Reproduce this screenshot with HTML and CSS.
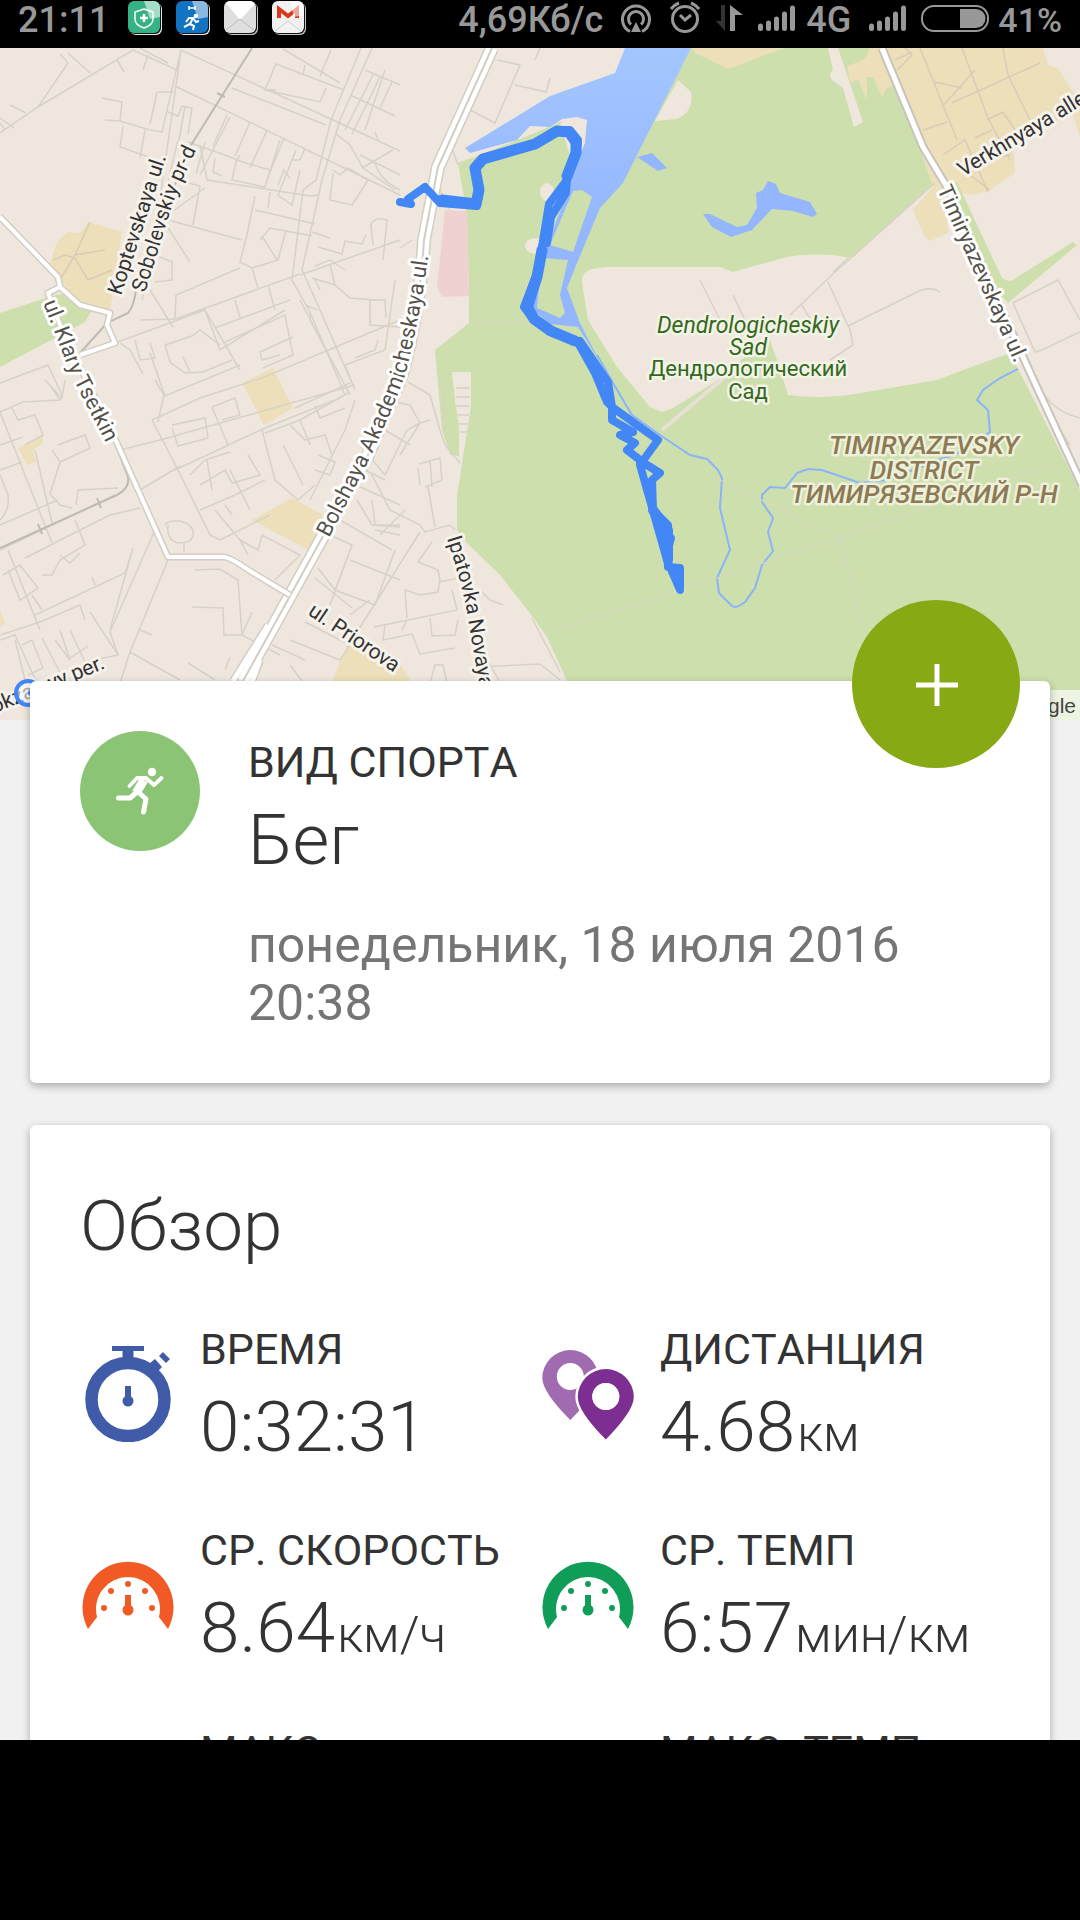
FILE: index.html
```
<!DOCTYPE html>
<html lang="ru">

<head>
    <meta charset="UTF-8">
    <meta name="viewport" content="width=device-width, initial-scale=1.0">
    <title>Тренировка</title>
    <link rel="stylesheet" href="styles.css">
</head>

<body>
    <header class="status-bar">
        <div class="status-left">
            <span class="clock">21:11</span>
            <svg width="34" height="36" viewBox="0 0 34 36">
                <rect x="2" y="3" width="32" height="32" rx="6" fill="#e8e8e8" />
                <rect x="1" y="2" width="32" height="32" rx="6" fill="#111" />
                <rect x="0" y="1" width="32" height="32" rx="6" fill="#35b385" />
                <path d="M16 1h10a6 6 0 0 1 6 6v10L22 19z" fill="#fff" opacity=".55" />
                <path d="M16 9l9 3v7q0 6-9 9q-9-3-9-9v-7z" fill="none" stroke="#fff" stroke-width="1.500" />
                <path d="M16 14v8M12 18h8" stroke="#fff" stroke-width="2.500" />
            </svg>
            <svg width="34" height="36" viewBox="0 0 34 36">
                <rect x="2" y="3" width="32" height="32" rx="6" fill="#e8e8e8" />
                <rect x="1" y="2" width="32" height="32" rx="6" fill="#111" />
                <rect x="0" y="1" width="32" height="32" rx="6" fill="#1273c0" />
                <path d="M16 1h10a6 6 0 0 1 6 6v10L22 19z" fill="#fff" opacity=".5" />
                <path d="M13 6v4M19 6v4M13 8h6" stroke="#fff" stroke-width="1.500" />
                <circle cx="20" cy="16" r="2.300" fill="#fff" />
                <path d="M10 22l3-4h4l-3 6-6 3M14 24l4 2-1 4M17 18l3 4 3-1" fill="none" stroke="#fff" stroke-width="2" />
            </svg>
            <svg width="34" height="36" viewBox="0 0 34 36">
                <rect x="2" y="3" width="32" height="32" rx="6" fill="#c8c8c8" />
                <rect x="1" y="2" width="32" height="32" rx="6" fill="#111" />
                <rect x="0" y="1" width="32" height="32" rx="6" fill="#dedede" />
                <path d="M2 3Q4 1 6 1h20q3 0 5 3L16 20z" fill="#fff" />
                <path d="M1 31l15-12 15 12" fill="none" stroke="#bbb" />
            </svg>
            <svg width="34" height="36" viewBox="0 0 34 36">
                <rect x="2" y="3" width="32" height="32" rx="6" fill="#c8c8c8" />
                <rect x="1" y="2" width="32" height="32" rx="6" fill="#111" />
                <rect x="0" y="1" width="32" height="32" rx="6" fill="#f1f1f1" />
                <path d="M7 18V9l9 7 9-7v9" fill="none" stroke="#d93a1e" stroke-width="4" />
                <path d="M18 1h8a6 6 0 0 1 6 6v8L22 17z" fill="#fff" opacity=".55" />
                <path d="M3 31l13-10 13 10" fill="none" stroke="#d0d0d0" />
            </svg>
        </div>
        <div class="status-right">
            <span>4,69Кб/с</span>
            <svg width="43" height="36" viewBox="0 0 43 36" fill="none" stroke="#989898" stroke-width="3">
                <path d="M19 31.500a13.500 13.500 0 1 1 12 0" />
                <path d="M20 24.500a7.500 7.500 0 1 1 10 0" />
                <path d="M25 22l5 10h-10z" fill="#989898" stroke="none" />
            </svg>
            <svg width="38" height="36" viewBox="0 0 38 36" fill="none" stroke="#989898" stroke-width="3">
                <circle cx="23" cy="19" r="12.500" />
                <path d="M18 15l5 5 6-5M9 9q3-4 8-6M29 3q5 2 8 6" />
            </svg>
            <svg width="38" height="36" viewBox="0 0 38 36">
                <path d="M17 5h-4v16H8l9 10z" fill="#333" />
                <path d="M22 31V5l13 10h-8v16z" fill="#989898" />
            </svg>
            <svg width="44" height="36" viewBox="0 0 44 36" stroke="#989898" stroke-width="5" stroke-linecap="round">
                <path d="M6.500 26v2.500M14.500 23v5.500M22.500 19v9.500M30.500 14v14.500M38.500 8v20.500" />
            </svg>
            <span>4G</span>
            <svg width="54" height="36" viewBox="0 0 54 36" stroke="#989898" stroke-width="5" stroke-linecap="round">
                <path d="M12.500 26v2.500M20.500 23v5.500M28.500 19v9.500M36.500 14v14.500M44.500 8v20.500" />
            </svg>
            <svg width="69" height="36" viewBox="0 0 69 36">
                <rect x="1" y="6" width="66" height="25" rx="12" fill="none" stroke="#989898" stroke-width="2" />
                <path d="M39 9h16a9.500 9.500 0 0 1 0 19H39z" fill="#989898" />
            </svg>
            <span class="battery">41%</span>
        </div>
    </header>

    <main class="screen">
        <svg class="map" viewBox="0 48 1080 672" preserveAspectRatio="xMidYMin slice">
            <defs>
                <linearGradient id="water" x1="0" y1="0" x2="0" y2="1">
                    <stop offset="0" stop-color="#a4c6ff" />
                    <stop offset=".6" stop-color="#93b6ff" />
                </linearGradient>
                <path id="p-sobolevskiy" d="M145 293L172 206Q178 188 197 148" />
                <path id="p-klary" d="M43 303L55 333L70 373L112 455" />
                <path id="p-bolshaya" d="M329 538L368 462Q398 398 406 372Q424 300 430 240" />
                <path id="p-ipatovka" d="M447 538Q462 585 467 612L480 690" />
            </defs>

            <!-- built-up quarters -->
            <g fill="#ecdfb9">
                <path d="M88 222L122 232L110 310L80 303L60 280L50 263L57 242L68 232L80 233z" />
                <path d="M242 383L273 368L293 408L264 425z" />
                <path d="M18 448L43 435V443L33 450L36 462L27 465z" />
                <path d="M252 520L292 498L323 515L312 552z" />
                <path d="M348 643L400 663L412 684H331z" />
                <path d="M0 610L5 623L0 626z" />
            </g>

            <!-- parks -->
            <g fill="#cddfad">
                <path d="M0 313L55 295L68 293L92 310L85 322L0 367z" />
                <path d="M458 163L480 155L530 135L560 122L600 125L692 48H882L897 88L935 183L851 258L833 255Q800 253 783 258L733 272L720 267H607Q580 268 582 282L588 320L617 367L650 407L662 412L673 408L723 377L768 335L777 360L788 395Q827 400 867 392L937 380L963 370L1010 353L1080 490V720H580L567 681L547 637L533 617L500 575L467 543L457 530V497L463 457L450 455L442 430L435 350L469 323V290L467 215z" />
            </g>
            <g fill="#efe7de">
                <path d="M452 372H471V407L463 457H459V427L455 400z" />
                <path d="M678 80L691 92Q694 112 677 119L655 121z" />
                <path d="M828 48H838L863 122L854 127L843 88L832 80Q828 74 833 70z" />
                <ellipse cx="547" cy="192" rx="7" ry="9" />
                <ellipse cx="537" cy="246" rx="12" ry="8" />
                <path d="M548 250L572 257L558 260L542 258z" />
                <path d="M560 125L565 117L587 118L585 145L575 170z" />
            </g>
            <g fill="#ecdfb9">
                <path d="M695 53L692 48H784L728 69z" />
                <path d="M868 48Q872 58 847 66L850 82L858 80L867 100V77H873L882 97L887 88L897 85L882 48z" />
                <path d="M882 48H1043L1048 65L1058 68L1080 103V137L1072 112L1013 148L1015 173L987 192L970 195L945 190L948 233L930 241L925 237L913 210L933 187L900 92z" />
            </g>
            <path d="M950 182H957L1002 278Q1008 282 1013 280L1073 242L1077 245L1008 303L996 290z" fill="#cddfad" />
            <path d="M445 210L467 211L469 296L442 297L437 287z" fill="#efd2cf" />

            <!-- water -->
            <path d="M625 48H691L636 157L623 183L600 208L577 263L567 288L580 323L600 362L578 327L550 324L533 310L535 287L550 237L570 187L572 173L585 143L587 120L577 117L562 119L550 127L530 126L517 140L470 153L465 148L550 96L615 73z" fill="url(#water)" />
            <path d="M573 191L582 190L592 197L573 252L550 245z" fill="#cddfad" />
            <path d="M542 258L568 260L560 295L565 313L560 318L537 308z" fill="#cddfad" />
            <path d="M637 157L652 153L667 168L658 171z" fill="#93b6ff" />
            <path d="M703 214H710L737 227L747 225L757 208L756 193L763 190L768 181L776 184L780 193L810 202L817 214L813 217L793 211L772 209L752 230L731 237L712 227z" fill="#93b6ff" />
            <path d="M597 355L613 383L632 415L660 435L690 455L707 459L718 470L722 478L720 508L730 550L717 578L719 593L732 606Q736 609 745 602L755 588L762 565L773 551L768 532L773 518L762 502V495L770 487L785 488L797 473L808 469L822 470L860 483L887 480L960 452L990 432L988 410L977 400L983 390L1000 378L1018 369" fill="none" stroke="#8bb4f8" stroke-width="2" />

            <!-- side streets -->
            <g fill="none" stroke="#d7d1c8" stroke-width="1.500">
                <path d="M0 133L38 107L133 50L177 70M5 130L0 123M38 107L68 63L60 54M68 53L90 73M10 105L26 113M0 118L14 128M117 60L124 72M148 55L143 70M140 48L168 63" />
                <path d="M102 98L122 102L120 121L105 120M120 121L150 130L162 132L181 50L333 120L400 151M175 86L400 195M181 50L150 270L142 300M157 92L150 124M158 92L175 92M185 106L179 140M168 112L178 116L182 106L192 108L188 134" />
                <path d="M123 126L120 147L152 158M145 130L140 158M178 140L160 215M232 88L326 125M188 142L225 155L240 161M227 115L213 146M250 122L235 156M267 130L250 168M284 138L270 172M240 155L236 162L232 180L265 187L270 170L240 161M265 187L280 140M305 148L300 160L293 160M290 178L284 170L278 185M296 150L278 195L292 205L300 170" />
                <path d="M200 145L207 180L310 196L318 195M205 142L196 174M230 117L200 175M215 158L213 172L222 176M177 180L200 186L193 225M165 217L205 188M168 220L242 240M255 196L247 235L240 262L252 268L278 260L286 230M255 210L315 224M270 192L268 208M262 236L277 260M260 240L270 228L312 236M252 268L258 288" />
                <path d="M361 48L331 120L316 180L303 190L292 280L310 312L345 395M372 48L340 120L322 180L302 270L320 310L355 390M276 90L265 90L276 64L344 90M283 49L340 83M265 90L320 102L326 88M305 65L303 75M331 50L320 76M365 70L400 85M373 75L345 130M380 77L352 134M392 82L380 108M350 95L395 116M375 132L378 140" />
                <path d="M335 133L350 145L363 168L395 190M333 170L340 175L348 168L368 180L352 205L330 200L333 173M362 168L393 150M375 163Q380 180 400 190M312 232L330 238M318 247L342 254L345 241L362 244L366 235M373 245L371 225Q374 216 387 220L383 260M300 275L400 240M315 266L330 260L345 270M330 264L335 285L350 298L375 300M312 278L335 285M315 280L320 290M305 305L318 310" />
                <path d="M175 319L300 274M175 319L176 295L240 268M140 320L175 319M143 250L172 262L172 280L155 282M163 220L190 262M150 290L173 327M115 343L205 310L240 370M205 310L220 350L285 310M215 328L290 300M235 300L240 318M223 343L285 315L293 355L263 368M293 337L260 352L262 360L280 355M268 285L275 310M300 300L350 395M310 313L310 320L350 395" />
                <path d="M120 343L130 350L143 374M135 340L140 360L155 358L150 343M165 345L170 362L185 373L203 372L232 360M165 345L192 336L200 330L220 345M183 357L190 372M150 353L165 396L240 365M370 300L370 325L400 327M395 280L385 350L345 365L350 378M355 358L375 350L378 340M386 318L385 300L370 300" />
                <path d="M0 412L23 402L60 400L62 395L48 365L0 383M50 385L60 400M45 380L62 398L65 380M0 412L52 543M12 408L18 420L35 415L43 435L25 445M35 450L52 523M52 450L60 462L90 448L85 435L58 445M60 462L50 494L60 505L72 508M76 505L78 490L118 488M115 495L0 550" />
                <path d="M0 445L23 437M0 470L22 462M0 475L8 495Q10 510 0 520M0 525L58 500M25 558L80 530M80 530L110 515L140 508M75 520L85 545L60 560L52 575L42 575M60 555L70 563L80 553M8 550L40 630M3 575L20 565L38 588L20 600L8 570M0 635L40 622L80 605L85 620M35 615L125 573L133 548L110 630M32 595L42 610M92 577L95 585" />
                <path d="M155 530L110 632L118 655M168 560L130 652L120 683M130 652L180 680M90 612L118 655L85 662L70 630M15 640L25 680M42 638L65 682M22 645L32 640L43 668L28 675M55 640L70 660M70 658L88 646M60 630L70 660M195 570L220 569L238 580L242 635L280 655M192 607L223 608L224 635L242 635M242 635L252 612M140 630L152 635M230 657L225 670M188 663L215 680M0 640L15 635L40 690" />
                <path d="M152 420L200 398L262 378L400 320M160 440L355 385M152 420L178 470L210 535L220 540M158 422L164 395L155 380M175 470L265 428L340 398M120 450L160 440M140 490L180 466M172 425L205 418L208 438L178 446L172 428M212 407L235 398L240 415L222 420M212 407L228 445M262 430L275 480L298 500L315 485M265 433L300 420L310 445M283 445L303 485M190 475L205 460L230 452M200 485L225 470L232 483L260 475L248 455M207 460L212 490M230 470L250 510M215 510L240 540L248 555M200 510L235 495L265 480M225 505L232 515M220 540L270 515M240 540L258 550L262 535L300 555L275 580" />
                <path d="M295 408L350 383M300 420L350 392M315 405L320 418L345 408M290 425L305 440L325 435L332 455M318 455L335 462L330 475L315 470M345 430L355 400M345 430L310 500M345 480L400 505M372 500L375 525L400 525M340 520L392 550M330 535L352 545L335 590M318 568L335 590L375 605L395 550M352 545L330 605M315 578L352 608M290 640L340 660L350 645L305 622M272 645L305 660M290 665L305 685M165 525Q168 520 180 521Q195 525 193 536Q190 544 178 543Q166 540 168 525M184 544V552" />
                <path d="M372 475L390 510L420 525L425 532L450 525L455 530M365 470L385 480M357 500L372 525L400 527M360 445L385 475L407 430L420 423L430 420M385 400L410 405L420 423L400 455M385 430L410 445M408 382L430 395L440 430L445 445L460 463M419 464L440 458L442 480L425 487M430 460L432 487M418 468L420 485M428 487L435 527M420 532L352 640M405 510L380 535M350 560L400 580M375 530L400 535M370 600L350 615" />
                <path d="M432 542L418 562L438 570L440 580L438 592L420 595L405 590L407 618M438 582L460 578M374 627L457 610L452 590M385 626L383 640L412 634L420 654L455 648M430 618L432 636L455 635L458 620M430 683L435 665L443 665L447 683M480 590L490 600L503 605M485 655L500 683M475 667L540 664L560 680M532 618L560 672M407 620L402 630M442 378L445 430" />
                <path d="M456 388H470M456 397H470M456 406H470M457 415H469M459 424H468M460 432H467" />
                <path d="M497 60L520 65L495 123L470 110M515 85L546 92L550 78M535 60L540 48M458 165L450 143M450 210L440 190M360 155L400 175M400 248L412 240M385 70L365 130" />
                <path d="M935 183L851 258L835 272L790 315M833 272L848 258M828 282L850 330L853 345L830 360M848 326L915 293Q930 285 940 292M700 280L720 320M733 295L745 320M802 305L815 328M1013 303L1058 280L1080 320M1013 303L1035 352L1042 350L1080 332M1033 372Q1045 410 1080 418M1060 430L1070 445" />
                <path d="M662 430L725 377" stroke="#e8e0d5" stroke-width="4" />
            </g>
            <g fill="none" stroke="#d9ccb8" stroke-width="1.500">
                <path d="M897 70L912 55L905 48M920 48L957 140M895 60L912 52M935 82L962 88M942 107L975 70M952 103L1040 63M962 48L988 118L1010 160M1003 48L1008 75L1030 120M923 130L947 122M943 155L965 140L988 192M987 120L1003 112L1015 130M975 138L992 130M970 165L1010 155M970 175L990 190" />
                <path d="M60 280L75 255L105 250M53 260L65 255L75 258L88 280L112 270M75 255L90 222" />
            </g>
            <g fill="none" stroke="#dad8c6" stroke-width="1">
                <path d="M545 633L650 600L840 538L1050 465M720 480L840 538L862 625M470 323L540 322" />
            </g>

            <!-- railway -->
            <g fill="none" stroke="#bdbab5" stroke-width="2">
                <path d="M252 48L188 150L136 290Q134 306 128 313L107 323L80 353M115 443L128 477Q130 488 117 495L0 548M38 524L42 534M97 498L101 508M217 93L225 97" />
            </g>

            <!-- main roads -->
            <g fill="none" stroke-linejoin="round">
                <path d="M492 48L438 167L424 240Q420 310 402 375L368 455L322 538L243 681" stroke="#d3cdc4" stroke-width="14" />
                <path d="M268 625L233 681M260 660L249 690" stroke="#d3cdc4" stroke-width="8" />
                <path d="M492 48L438 167L424 240Q420 310 402 375L368 455L322 538L243 681" stroke="#fff" stroke-width="11" />
                <path d="M268 625L233 681M260 660L249 690" stroke="#fff" stroke-width="5" />
                <path d="M492 48L438 167L424 240Q420 310 402 375L368 455L322 538L243 681" stroke="#d3cdc4" stroke-width="2" />
                <path d="M882 48L923 147L947 187L1028 368L1082 485" stroke="#c9c3bd" stroke-width="9" />
                <path d="M882 48L923 147L947 187L1028 368L1082 485" stroke="#fff" stroke-width="5" />
                <path d="M0 217L58 277L60 287L48 293L62 330L117 443L168 557H223Q230 557 250 571L290 595M60 287L80 305L110 313L107 325L115 343L80 355" stroke="#d3cdc4" stroke-width="7" />
                <path d="M0 217L58 277L60 287L48 293L62 330L117 443L168 557H223Q230 557 250 571L290 595M60 287L80 305L110 313L107 325L115 343L80 355" stroke="#fff" stroke-width="4" />
            </g>

            <!-- recorded track -->
            <g fill="none" stroke="#4387f6" stroke-width="8" stroke-linecap="round" stroke-linejoin="round">
                <path d="M400 202L411 204L408 199L425 187L440 203L477 206L480 190L475 168L482 158L535 145L557 130H570L578 140L577 153L567 180L549 204L542 247L537 273L524 307L532 318L550 332L577 341L595 373L607 402L612 407L658 440L642 462L660 473L652 480L653 510L668 525V535L671 538L667 553L668 567L680 568V590L667 560L640 465V460L627 450L635 443L620 435L633 432L612 420V407L608 382L580 341" />
                <path d="M567 180L566 193L551 217L547 243M542 247L537 280L529 307" />
                <path d="M442 200L476 204L479 190L475 168L483 159L535 144L557 131L569 132L576 142L576 153L567 176M542 250L537 277L527 306L534 319L551 331L575 341" stroke-width="11" />
                <path d="M653 510L668 530L668 560" stroke-width="10" />
            </g>

            <!-- names -->
            <g class="street">
                <text transform="translate(121 296) rotate(-72)">Koptevskaya ul.</text>
                <text><textPath href="#p-sobolevskiy">Sobolevskiy pr-d</textPath></text>
                <text class="road"><textPath href="#p-klary">ul. Klary Tsetkin</textPath></text>
                <text class="road"><textPath href="#p-bolshaya">Bolshaya Akademicheskaya ul.</textPath></text>
                <text class="road" transform="translate(937 189) rotate(66)">Timiryazevskaya ul.</text>
                <text transform="translate(963 177) rotate(-31)">Verkhnyaya alley</text>
                <text><textPath href="#p-ipatovka">Ipatovka Novaya</textPath></text>
                <text transform="translate(307 614) rotate(34)">ul. Priorova</text>
                <text transform="translate(106 668) rotate(-22)" text-anchor="end">Vokzalnyy per.</text>
            </g>
            <g class="park" text-anchor="middle">
                <text class="latin" x="748" y="333">Dendrologicheskiy</text>
                <text class="latin" x="748" y="355">Sad</text>
                <text x="748" y="376">Дендрологический</text>
                <text x="748" y="399">Сад</text>
            </g>
            <g class="district" text-anchor="middle">
                <text x="924" y="454">TIMIRYAZEVSKY</text>
                <text x="924" y="479">DISTRICT</text>
                <text x="924" y="503">ТИМИРЯЗЕВСКИЙ Р-Н</text>
            </g>

            <circle cx="28" cy="693" r="12" fill="#fff" fill-opacity=".6" stroke="#4387f6" stroke-width="4" />
            <circle cx="31" cy="693" r="3" fill="#4387f6" />
            <rect x="980" y="690" width="100" height="30" fill="#fff" opacity=".65" />
            <text class="credit" x="1076" y="713" text-anchor="end">Google</text>
        </svg>

        <section class="card sport">
            <button class="add" type="button" aria-label="Добавить">
                <svg width="44" height="44" viewBox="0 0 44 44" stroke="#fff" stroke-width="5">
                    <path d="M23 2v42M2 23h42" />
                </svg>
            </button>
            <div class="sport-icon">
                <svg width="50" height="50" viewBox="0 0 50 50" fill="none" stroke="#fff" stroke-linecap="round" stroke-linejoin="round">
                    <circle cx="37" cy="6" r="4.200" fill="#fff" stroke="none" />
                    <path d="M14.500 20L22 12H31L39 19L46.500 12" stroke-width="3.800" />
                    <path d="M29 14L21 27" stroke-width="9" stroke-linecap="butt" />
                    <path d="M22 26L15 32H3.500M22 25L31 33L28.500 46" stroke-width="5" />
                </svg>
            </div>
            <div class="sport-text">
                <div class="label">ВИД СПОРТА</div>
                <div class="value">Бег</div>
                <div class="date">понедельник, 18 июля 2016 20:38</div>
            </div>
        </section>

        <section class="card overview">
            <h2 class="title">Обзор</h2>
            <div class="stats">
                <div class="stat">
                    <svg class="icon" viewBox="0 0 96 96" fill="#405ca8">
                        <circle cx="48" cy="53.500" r="36.500" fill="none" stroke="#405ca8" stroke-width="12.500" />
                        <path d="M32 0h32v5H53.500v8h-11V5H32z" />
                        <path d="M45 40h6v15h-6z" />
                        <circle cx="48" cy="55" r="5.500" />
                        <path d="M70 17l5-4 7 8-5 5zM79 10l4-4 7 7-4 4z" />
                    </svg>
                    <div>
                        <div class="label">ВРЕМЯ</div>
                        <div class="value">0:32:31</div>
                    </div>
                </div>
                <div class="stat">
                    <svg class="icon" viewBox="0 0 96 96" fill-rule="evenodd">
                        <path d="M30.300 4a28 28 0 0 1 28 28q0 14-28 42q-28-28-28-42a28 28 0 0 1 28-28zM30.300 17a13.500 13.500 0 1 0 0 27a13.500 13.500 0 1 0 0-27z" fill="#a06bb0" />
                        <path d="M65.800 23a28 28 0 0 1 28 28q0 14-28 42.500q-28-28-28-42.500a28 28 0 0 1 28-28zM65.800 37a13.500 13.500 0 1 0 0 27a13.500 13.500 0 1 0 0-27z" fill="#7c2f91" stroke="#fff" stroke-width="5" paint-order="stroke" />
                        <circle cx="65.800" cy="50.500" r="13.500" fill="#fff" />
                    </svg>
                    <div>
                        <div class="label">ДИСТАНЦИЯ</div>
                        <div class="value">4.68<span class="unit">км</span></div>
                    </div>
                </div>
                <div class="stat">
                    <svg class="icon" viewBox="0 0 96 96" fill="#f15a24">
                        <path d="M8 82A45.500 45.500 0 1 1 88 82L79 70A32 32 0 1 0 17 70z" />
                        <path d="M45 48h6v15h-6z" />
                        <circle cx="48" cy="63" r="5.500" />
                        <circle cx="48" cy="37" r="3" />
                        <circle cx="31" cy="44" r="3" />
                        <circle cx="65" cy="44" r="3" />
                        <circle cx="24" cy="61" r="3" />
                        <circle cx="72" cy="61" r="3" />
                    </svg>
                    <div>
                        <div class="label">СР. СКОРОСТЬ</div>
                        <div class="value">8.64<span class="unit">км/ч</span></div>
                    </div>
                </div>
                <div class="stat">
                    <svg class="icon" viewBox="0 0 96 96" fill="#0f9d58">
                        <path d="M8 82A45.500 45.500 0 1 1 88 82L79 70A32 32 0 1 0 17 70z" />
                        <path d="M45 48h6v15h-6z" />
                        <circle cx="48" cy="63" r="5.500" />
                        <circle cx="48" cy="37" r="3" />
                        <circle cx="31" cy="44" r="3" />
                        <circle cx="65" cy="44" r="3" />
                        <circle cx="24" cy="61" r="3" />
                        <circle cx="72" cy="61" r="3" />
                    </svg>
                    <div>
                        <div class="label">СР. ТЕМП</div>
                        <div class="value">6:57<span class="unit">мин/км</span></div>
                    </div>
                </div>
                <div class="stat">
                    <div class="icon"></div>
                    <div>
                        <div class="label">МАКС.</div>
                    </div>
                </div>
                <div class="stat">
                    <div class="icon"></div>
                    <div>
                        <div class="label">МАКС. ТЕМП</div>
                    </div>
                </div>
            </div>
        </section>
    </main>

    <footer class="nav-bar"></footer>
</body>

</html>
```
FILE: styles.css
```
* {
    box-sizing: border-box;
}

body {
    margin: 0;
    height: 100vh;
    display: flex;
    flex-direction: column;
    background: #000;
    color: #333;
    font-family: Roboto, "Noto Sans", sans-serif;
}

svg {
    display: block;
    flex-shrink: 0;
}

.status-bar {
    height: 48px;
    flex-shrink: 0;
    padding: 0 18px 8px;
    display: flex;
    justify-content: space-between;
    align-items: flex-start;
    color: #989898;
    font-size: 36px;
    font-weight: 500;
    line-height: 40px;
}

.status-left,
.status-right {
    display: flex;
}

.status-left {
    gap: 14px;
}

.status-right {
    gap: 8px;
}

.clock {
    margin-right: 5px;
}

.battery {
    font-size: 34px;
}

.screen {
    flex: 1;
    min-height: 0;
    overflow: hidden;
    background: #f1f1f1;
}

.map {
    width: 100%;
    height: 672px;
    background: #efe7de;
}

.street {
    font-size: 21px;
    fill: #333;
    stroke: #f6f2ec;
    stroke-width: 6px;
    stroke-linejoin: round;
    paint-order: stroke;
}

.street .road {
    font-size: 22px;
    fill: #55524c;
    stroke: #fff;
}

.park {
    font-size: 22px;
    fill: #33691e;
    stroke: #f3f3e6;
    stroke-width: 5px;
    stroke-linejoin: round;
    paint-order: stroke;
}

.park .latin {
    font-size: 23px;
    font-style: italic;
}

.district {
    font-size: 26px;
    font-style: italic;
    font-weight: 500;
    fill: #8c7a54;
    stroke: #eef0da;
    stroke-width: 5px;
    stroke-linejoin: round;
    paint-order: stroke;
}

.credit {
    font-family: "Liberation Sans", Arial, sans-serif;
    font-size: 21px;
    fill: #444;
}

.card {
    position: relative;
    margin: 0 30px 42px;
    background: #fff;
    border-radius: 6px;
    box-shadow: 0 3px 8px rgba(0, 0, 0, .3);
}

.sport {
    margin-top: -39px;
    padding: 50px 50px 51px;
    display: flex;
    gap: 48px;
}

.sport-icon {
    width: 120px;
    height: 120px;
    flex-shrink: 0;
    display: flex;
    align-items: center;
    justify-content: center;
    border-radius: 50%;
    background: #8bc474;
}

.sport-text {
    padding-top: 6px;
}

.add {
    position: absolute;
    top: -81px;
    right: 30px;
    width: 168px;
    height: 168px;
    padding: 0;
    display: flex;
    align-items: center;
    justify-content: center;
    border: 0;
    border-radius: 50%;
    background: #87a914;
    cursor: pointer;
}

.label {
    font-size: 43px;
    line-height: 50px;
    font-kerning: none;
}

.value {
    margin-top: 11px;
    font-size: 71px;
    font-weight: 300;
    line-height: 84px;
    white-space: nowrap;
}

.unit {
    margin-left: 2px;
    font-size: 50px;
    line-height: 50px;
}

.date {
    margin-top: 34px;
    color: #757575;
    font-size: 50px;
    line-height: 58px;
}

.overview {
    padding: 59px 50px;
}

.title {
    margin: 0 0 56px;
    font-size: 71px;
    font-weight: 300;
    line-height: 84px;
}

.stats {
    display: grid;
    grid-template-columns: 1fr 1fr;
    row-gap: 56px;
}

.stat {
    display: flex;
    gap: 24px;
}

.icon {
    width: 96px;
    height: 96px;
    margin-top: 22px;
    flex-shrink: 0;
}

.nav-bar {
    height: 180px;
    flex-shrink: 0;
}
```
